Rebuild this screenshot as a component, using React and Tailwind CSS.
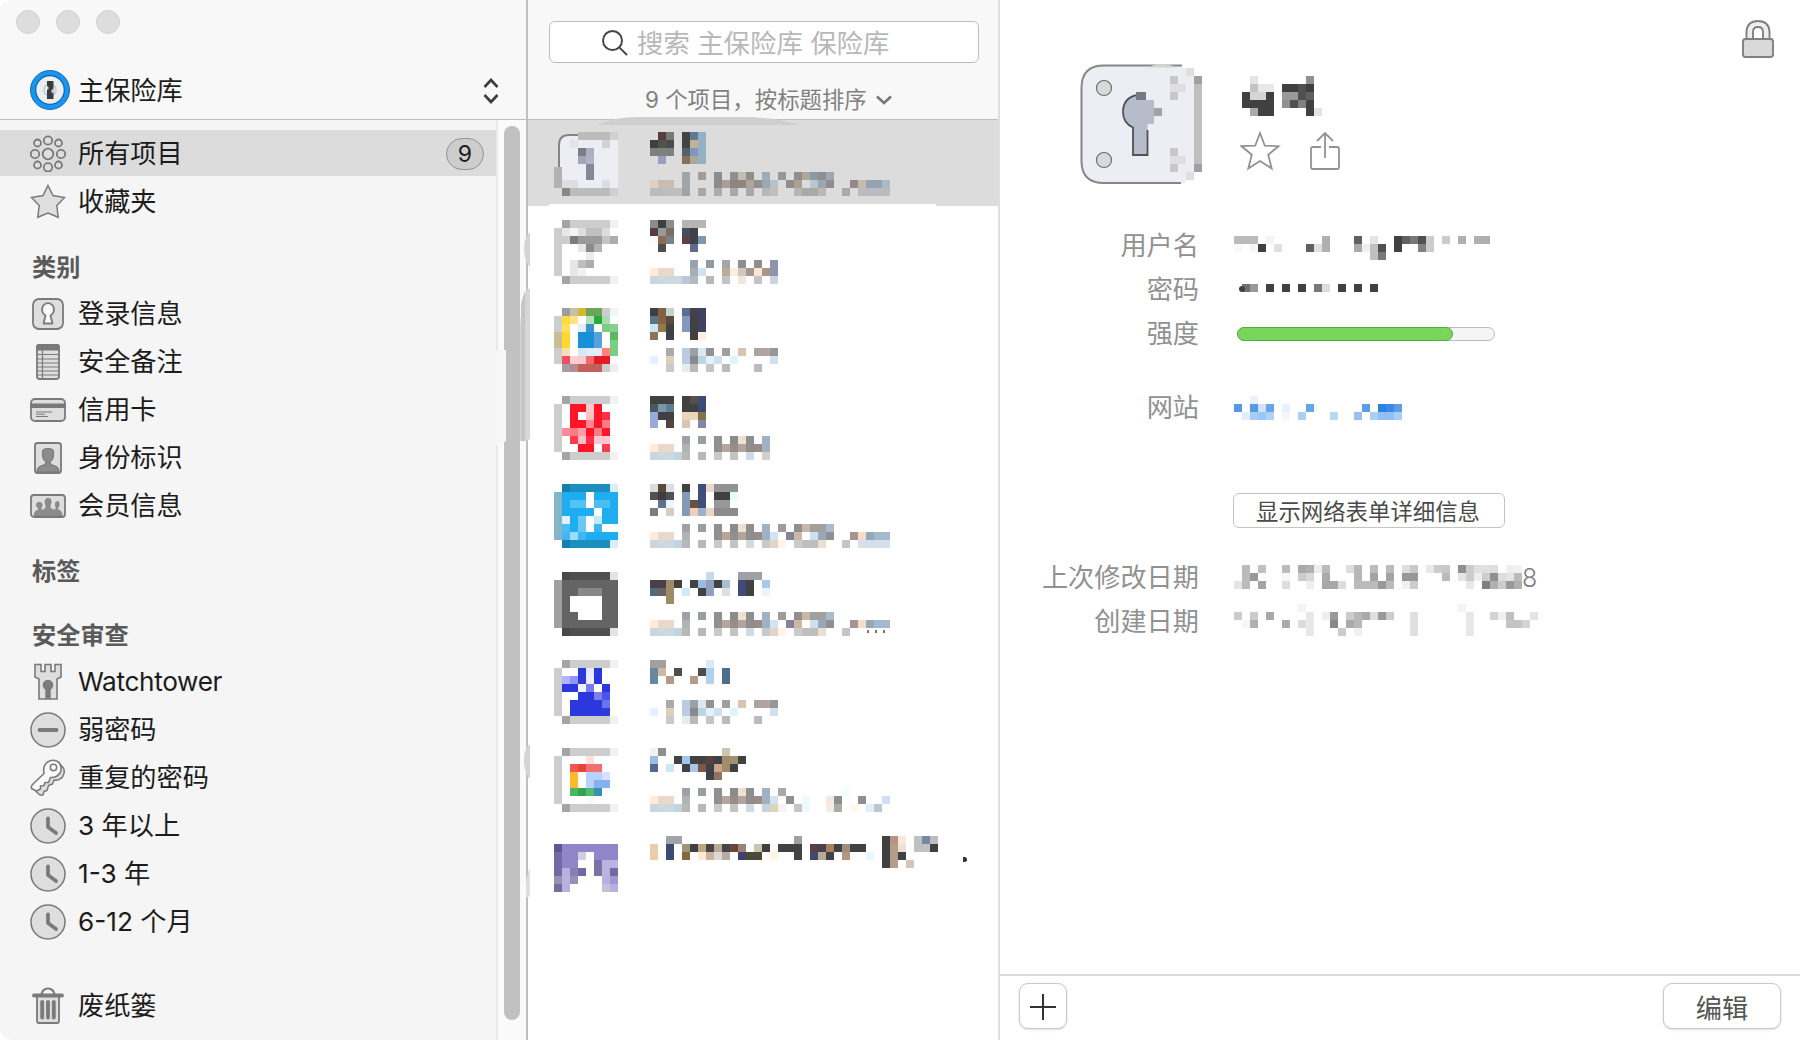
import React from "react";

/* Paints a grid of square cells. Each line is "row|col:hex col-col:hex ...". */
function Mosaic({ data, cols, rows, className = "" }) {
  const cells = [];
  data
    .trim()
    .split("\n")
    .forEach((line) => {
      const [r, rest] = line.trim().split("|");
      rest
        .trim()
        .split(/\s+/)
        .forEach((token) => {
          const [range, color] = token.split(":");
          const [a, b] = range.split("-").map(Number);
          const end = b === undefined ? a : b;
          cells.push({ x: a * 8, y: Number(r) * 8, w: (end - a + 1) * 8, c: "#" + color });
        });
    });
  return (
    <svg
      width={cols * 8}
      height={rows * 8}
      viewBox={`0 0 ${cols * 8} ${rows * 8}`}
      shapeRendering="crispEdges"
      className={"block shrink-0 " + className}
    >
      {cells.map((c, i) => (
        <rect key={i} x={c.x} y={c.y} width={c.w} height={8} fill={c.c} />
      ))}
    </svg>
  );
}

const FRAME = `
0|1:a4a4a4 2-6:cdcdcd 7:f1f1f1
1|0:cdcdcd
2|0:cdcdcd
3|0:cdcdcd
4|0:cdcdcd
5|0:cdcdcd
6|0:cdcdcd
7|1:a4a4a4 2-6:cdcdcd 7:f1f1f1
`;

const SUB_SHORT = `
5|4:9fa3a6 6:999ea0 8:938f8e 10:8c8a8c 11:efe1d0 12:8e8e8e 14:a0b2c2
6|0:ffeadb 1-2:ead8cc 4:b0b4b6 8:938f8e 9:bba59a 10:938f8e 11:b0a59b 12:8e8e8e 13:9a8c88 14:a0b2c2
7|0:cad5e0 1-2:ccd8e2 3:c4d4df 4:b8b8b8 6:b8b8b8 8:c9c9c9 10:c4c4c4 12:cfdbe6 14:cfcfcf
`;

const SUB_LONG =
  SUB_SHORT +
  `5|16:a09c9c 18:8f8f8f 19:cab8a4 20:a0a0a0 21:a3a09e 22:a9bbcc
6|15:d0e4f6 17:84839a 18:c9b9a5 20:cfe0f0 21:98a8b8 22:908f94 25:a99590 26:f4dccb 27:94a8b8 28-29:a5b9ce
7|14:c5cacd 15:e3d5c2 16:fff5ea 18:cbcbcb 19-20:bfbfbf 21:eaded3 24:c5c5c5
`;

const SUB_PHONE = `
5|2:aaaaaa 4:bccbe0 5:9aa0a3 6:d9e9f3 7:8f9398 9:9ba0a3 11:d7c3b0 13:a6a6a6 14:b5a59c 15:979797
6|0:e2f1fd 2:dccfbc 4:bccbe0 5:878b8f 6:bfd4e2 7:e1f2fd 8:cfe1f0 10:e1f2fd 15:cfe1f0
7|2:c9c9c9 4:e3ebf4 5:b9b9b9 7:c5c5c5 9:bbbbbb 13:bbbbbb
`;

const ITEMS = [
  {
    icon: `
0|3-6:bcbcbc 7:d0d0d0
1|2:e2e3e6 3-5:edeef3 6:d2d3d8 7:edeef3
2|1-2:edeef3 3:7b7d8c 4:aeaec2 5-7:edeef3
3|1-2:edeef3 3:a5a5b8 4:b2b1c5 5-7:edeef3
4|1-3:edeef3 4:878799 5-7:edeef3
5|1-3:edeef3 4:878799 5-7:edeef3
6|1-2:dcdde0 3-5:edeef3 6:dcdde0 7:edeef3
7|1:888888 2-6:bcbcbc 7:d0d0d0`,
    text: `
0|1:5b3c42 2:777b76 4:444444 5:5e7b90 6:94b0c3
1|0:3c4140 1:525250 2:4b4a4c 4:444444 5:c4b096 6:94b0c3
2|0-2:7e827d 4:56606a 5:8296bd 6:94b0c3
3|1:99a0bd 4:877060 5:aaa899 6:94b0c3
5|4:a0a5a8 6:a59c9a 8:8d8b8b 10:958f8b 11:c5bdb4 12:8f8f8f 14:9cabb5 16:94979d 18:8f8f8f 19:b0a698 20:8c99a1 21:918f8f 22:99a9b7
6|0:e1cfbf 1-2:cbbcb2 4:a0a5a8 8:8d8b8b 9:ad9d97 10-11:8d8683 12:ada69c 13:918f8f 14:99a8b3 15:b7c2c8 17:908c90 18:aaa194 20:b9c6cf 21:99a8b3 22:908c90 25:998888 26:c9b9ac 27:93a2b5 28:96a4b2 29:a9bacb
7|0-1:b9bcc0 2-3:bebebe 4:a0a3a5 6:a9a9a9 8:adadad 10:a9a9a9 12:a9a9a9 14:b6b7b8 15:c4beb6 18:b6b6b6 19-20:a9a9a9 21:c0b8b0 24:aaaaaa 26-29:b9bdc3`,
  },
  {
    icon:
      FRAME +
      `1|1:e7e7e7 2:f4f4f4 3:dedede 4-5:c0c0c0 6:dcdcdc
2|1:cdcdcd 2:7c7c7c 3:999999 4-5:9b9b9b 6:c5c5c5 7:adadad
3|3:e6e6e6 4:8a8a8a 5:b4b4b4
4|4:ececec
5|2:e6e6e6 3:bfbfbf 4:adadad
6|2:e8e8e8 3:f1f1f1`,
    text: `
0|0:8c8c8c 1:3d4040 2:8c8c8c 4-6:b5b5b5
1|0:563c42 1:999999 2:7b6b60 4:40505f 5:404048
2|0:fffaf5 1:8c6c4f 2:78818a 4:5c4044 5:404048 6:7d9ab3
3|1:504d50 5:5f6b90
5|5:98a3ab 7:93999e 9:a6a6a6 11:8e8e8e 13:8e8e8e 15:8e93ae
6|0:ffeadb 1-2:ead8cc 5:a6aeb8 6:cfe3f5 9:b9ab9e 10:ffecdc 11:d0c8bd 12:a6968f 13:ffe4d2 14:a6968f 15:8e93ae
7|0:cad5e0 1-3:ccd8e2 4:b9c8d8 5:b8b8b8 7:b8b8b8 9:c4c4c4 11:f0e6de 13:c4c4c4 15:c9d4e0`,
  },
  {
    icon: `
0|1:9e9da6 2:c9c2a2 3:d1b932 4-5:6ca557 6:cdcdcd 7:f4f4f4
1|0:cdcdcd 1:ffdc3a 2:ffe285 4:b7e0b7 5:27ab3c 6:a9dcae
2|0:cdcdcd 1:ffe05a 3:e1edfa 4:3a91d0 6:7fcb85 7:86cf8c
3|0:c9bd96 1:ffd82d 3-4:1690d6 5:58a1da 7:5bb960
4|0:c9bd96 1:ffd82d 3-4:1690d6 5:58a1da 7:79cd84
5|0:cdcdcd 1:f4e1b1 3:d8e6f5 4-5:dfedfb 6:ff837a 7:79cd84
6|0:cdcdcd 1:ec5064 2:ffcfcf 3:ffc9d0 4:f0696e 5-6:e41b23
7|1:a49fa0 2:b58b90 3-5:c36057 6:cdcdcd 7:eeeeee`,
    text:
      `
0|0:3d4040 1:836043 2:c2d4ce 4:5b6d92 5:41424b 6:404260
1|0:5c7688 1:85613f 2:5a4a40 4:8498c0 5:414142 6:404260
2|0:c8e6f8 1:95774f 2:404242 4:8498c0 5:404040 6:404260
3|0:8e7355 2:404242 5:404040 6:fdf0e2` + SUB_PHONE,
  },
  {
    icon:
      FRAME +
      `1|2-3:ff1525 4:ffc8cc 5:ff1525
2|2:ff1525 4:ffc0c8 5:ff1525 6:ff3045
3|2-3:ff1525 4:ff8790 5:ff1525 6:ff7987
4|1:ff8b98 2:ff7987 3:ff9ba5 4:ff1525 5:ff7987 6:ff1525
5|2:ff3c4c 3:ffc0c8 4:ff3045 5-6:ffc8d0
6|3-4:ff1525 6:ff3c4c`,
    text:
      `
0|0-2:404242 4:414040 5:56504c 6:3c4a76
1|0:4a5862 1:7797a6 2:5d7d94 4-5:404042 6:3c4a76
2|0:9aaad8 1-2:404042 4-5:ecd3ba 6:82734f
3|0:9aaad8 2:504540 4:d9c6b2 6:7f88a6` + SUB_SHORT,
  },
  {
    icon: `
0|1:137fae 2-6:1b8fbe 7:dcebf4
1|0:85b4c8 1-3:1fadf2 5-7:1fadf2
2|0:85b4c8 1:1fadf2 2-3:52c3f5 5-6:4abdf5 7:1fadf2
3|0:85b4c8 1-4:1fadf2 6-7:1fadf2
4|0:85b4c8 1:dff3ff 2:1fadf2 3:6bcaf5 5:c5eaff 6-7:1fadf2
5|0:85b4c8 1:4cbcf3 2:1fadf2 3:68c7f3 5:3bb6f3
6|0:85b4c8 1:3fb8f5 2:9dddfb 3:3fb8f5 4-7:1fadf2
7|1:137fae 2-6:1b8fbe 7:dcebf4`,
    text:
      `
0|0:dcdcdc 1:5a4a3c 2:dcdde0 4:404242 6:404f7a 7:edd6cc 8-10:939393
1|0:4f5154 1:3f3c3b 2:4f5154 4:8599b8 6:404f7a 8-9:404242 10:e6fdff
2|1:5d728c 2:e9f7ff 4:8599b8 5:6a5242 6:404f7a 8-9:989898
3|0:7a7e80 2:d8cbc0 4:8599b8 5:edd0b5 6:9cb0c8 7:e9d4c8 8-10:8b8b8b` +
      SUB_LONG +
      `7|26-29:d4e0ec`,
  },
  {
    icon: `
0|1:484848 2-6:505050 7:e4e4e4
1|0:a0a0a0 1-7:646464
2|0:a0a0a0 1-2:646464 3-5:888888 6-7:646464
3|0:a0a0a0 1:646464 6-7:646464
4|0:a0a0a0 1:646464 6-7:646464
5|0:a0a0a0 1-2:646464 6-7:646464
6|0:a0a0a0 1-7:646464
7|1:484848 2-6:505050 7:e4e4e4`,
    text:
      `
0|7:c9d8ea 11-13:9f9fa8
1|0-1:46414a 2:a08b69 3:44403c 5:404244 6:9cbcdf 7:8f9fbd 8:404244 9:a9bfce 11:3f4a78 12:404242 14:a9c9e9
2|0:546878 1:6d6163 2:a08b69 4:cfe9ff 6:404244 7:8f9fbd 9:dedee2 11:3f4a78 12:404242 14:e9f6ff
3|2:a08b69` + SUB_LONG,
    dots: true,
  },
  {
    icon:
      FRAME +
      `1|3:2a38de 4:e8e8ff 5:2a38de
2|1:b0b4ff 2:9095f5 3:2a38de 4:eeeeff 5:2a38de
3|1-2:2a38de 3:f0f0ff 4:7a7cf5 6:2a38de
4|3-4:2a38de 5:7a80ee 6:4a55ee
5|2-5:2a38de 6:6a72f0
6|2-5:2a38de 6:2f3cd8`,
    text:
      `
0|0-1:a0a0a0 7:d9e9f7
1|0:6888a0 1:cfb9a4 3:4e5048 6:4e5048 7:afd0ee 9:4c6e8c
2|0:6888a0 2:b49984 5:b49b8c 7:afd0ee 9:4c6e8c` + SUB_PHONE,
  },
  {
    icon:
      FRAME +
      `1|4:ffe0e0
2|2:f25555 3:ea4335 4-5:f07070
3|2:fcba2c 4-5:b8d2fb 6:dce0ff
4|2:fcba2c 4:b8d2fb 5-6:86b0f4
5|2:47b765 3:34a44c 4:52ba72 5:3990b0
6|4:f4fff4`,
    text:
      `
0|0:f2f2f2 1:8f8f8f 9:cdc5b4
1|0:9fbbdf 3:404244 4:a4c5e6 5-6:404244 7:58403c 8:40404a 9:a08c69 10:a0916f 11:404040
2|0:56678f 2:c9eaf0 4:40404a 5:aac5ea 6:7b5748 7:404048 8:cca585 9:a08c69 10:404040
3|7:404048 8:8f7464` +
      SUB_SHORT +
      `5|16:a9a9a9 24:f2fdfd
6|15:d0e4f6 17:8f8f8f 19:eefaff 22:f5e9e4 23:8f8f8f 26:8f8f8f 29:d0dff6
7|14:c4d3de 15:ddd5b8 16:f4f4f4 18:c5c5c5 19:eefaff 22:f4ebe6 23:aaaaaa 25:fff8ee 27:e0f0fa 28:bfc6c9`,
  },
  {
    icon: `
1|0:5f5890 1-7:9085c8
2|0:726aa5 1-2:9085c8 3:d0cee0 5-7:9085c8
3|0:726aa5 1:9085c8 2:8f87c4 5:7a72a8 6-7:bab4e0
4|0:726aa5 1:b8b0e0 2:8880b0 3:726aa5 5:7a72a8 6:bab4e0 7:726aa5
5|0:9590b8 1:b8b0e0 2:9590b8 6:b8b0e0 7:a098d0
6|0:726f98 1:b8b0e0 6:c4c2d8 7:b8b0e0`,
    text: `
0|2-3:a0a4a8 18:a0a0a0 29:404040 30:b09484 31:fae8d8 33:bfc1c3 34:7788a5 35:bdbdbd
1|0:e9ceac 2:3f4a74 4:a0957c 5:404040 6:bba585 7:4a4444 8:b8ab95 9:44444a 10:6b453c 11:9a8478 13:cac5b0 14:404040 15:fffaf0 16-18:404244 20:5a4044 21:48404a 22:a58360 23:404244 24:a68b7c 25-26:404244 29:404040 30:b59c8b 31:eee0d4 33-34:bfc1c3 35:404040
2|0:e9ceac 2:3f4a74 4:826a40 6:ffe8d8 7:c9b4a4 8:e0d8d4 9:b8aca0 11:404070 12-13:4a4a38 15:fff6e0 18:404244 20:404a70 21:b8ab95 22:404244 24:b59580 27:e6f8ff 29:404040 30:b59c8b 31:404040
3|29:404040 30:b59c8b 32:d5c5b8`,
  },
];

const TITLE = `
0|1:e4e4e4 8:909090
1|1:c4c4c4 2-3:e8e8e8 5-6:404040 7:505050 8:404040
2|0:404040 1-2:d5d5d5 3:404040 5-6:999999 7:505050 8:606060
3|0-3:404040 5:909090 6:505050 7:808080 8:404040
4|1:aaaaaa 2-3:404040 8:404040 9:e4e4e4`;

const USERNAME = `
0|0-2:bbbbbb 4:f4f4f4 11:b0b0b0 15:606060 17:e4e4e4 20:404040 21:606060 22:787878 23:505050 24:cccccc 26:cccccc 28:b0b0b0 30-31:b0b0b0
1|0:f8f8f8 2:f6f6f6 3:404040 5:e0e0e0 9:606060 10:e0e0e0 11:b0b0b0 15:aaaaaa 16:f0f0f0 17:c0c0c0 18:505050 20:404040 23:808080 24:cccccc
2|17:c0c0c0 18:787878`;

const PASSWORD = `
0|1:707070 2:999999 4:404040 6:404040 8:404040 10:777777 11:dddddd 13:404040 15:404040 17:404040`;

const WEBSITE = `
0|2:e8f0fa
1|0:5598e8 2:5598e8 3:d0e0f6 4:69a3ec 6:e4f2fe 9:69a3ec 16:5c9dea 18:2882e0 19:4088e8 20:5c9dea
2|1:e0edfb 2:a8ccf5 3:98c8f5 4:b0d2f5 6:f4f8fc 8:b0cff0 12:b8d8f2 15:98bfee 17:b0cff0 18-19:90c0f4 20:a8cff5`;

const MODIFIED = `
0|1:bbbbbb 3:c0c0c0 6:bbbbbb 8:aaaaaa 9:b0b0b0 10:eeeeee 11:bbbbbb 14:dddddd 15:b8b8b8 17:bbbbbb 19:bbbbbb 21:dddddd 22:c8c8c8 24:e8e8e8 25:cccccc 26:c8c8c8 28:909090 29:cccccc 30-31:e0e0e0 32:dddddd 34:eeeeee 35:f2f2f2
1|1:bbbbbb 2:999999 6:f8f8f8 8:cccccc 9:d8d8d8 11:aaaaaa 15:b8b8b8 17:a4a4a4 19:a4a4a4 21-22:989898 26:bbbbbb 28:e4e4e4 29:cccccc 30:eeeeee 31:cccccc 32:909090 33:dddddd 34:e4e4e4 35:bbbbbb
2|0:e4e4e4 1:bbbbbb 3:a4a4a4 6:dddddd 9:eeeeee 11-12:a8a8a8 13:dddddd 15-17:bbbbbb 18:999999 19:bbbbbb 21:f0f0f0 22:cccccc 29:e8e8e8 31:808080 32:b0b0b0 33:cccccc 34:999999 35:b0b0b0`;

const CREATED = `
0|8:f4f4f4 28:f4f4f4
1|0:cccccc 2:cccccc 4:a8a8a8 9:e8e8e8 11:eeeeee 12:999999 14:cccccc 15:b8b8b8 16:aaaaaa 17:dddddd 18:999999 19:cccccc 22:e0e0e0 29:e8e8e8 32:d4d4d4 33:f0f0f0 34:c0c0c0 37:e4e4e4
2|1:f6f6f6 2:b0b0b0 6:aaaaaa 8:dddddd 9:e8e8e8 12:888888 14:aaaaaa 15:b8b8b8 22:e0e0e0 29:e8e8e8 34-35:c4c4c4 36:d4d4d4
3|9:e8e8e8 13:cccccc 15:f0f0f0 22:e0e0e0 29:e8e8e8`;

function Glyph({ children }) {
  return (
    <svg
      width="36"
      height="38"
      viewBox="0 0 36 38"
      fill="#dedede"
      stroke="#7a7a7a"
      strokeWidth="1.8"
      strokeLinejoin="round"
      className="block shrink-0"
    >
      {children}
    </svg>
  );
}

const AllIcon = () => (
  <Glyph>
    <circle cx="18" cy="20" r="5.300" />
    {[[18, 6.5], [18, 33.3], [5, 20], [31, 20]].map(([x, y]) => (
      <circle key={x + "-" + y} cx={x} cy={y} r="4.200" />
    ))}
    {[[7.5, 9], [28.5, 9], [7.5, 31], [28.5, 31]].map(([x, y]) => (
      <circle key={x + "-" + y} cx={x} cy={y} r="3.500" />
    ))}
  </Glyph>
);
const StarIcon = () => (
  <Glyph>
    <path strokeWidth="1.500" strokeLinejoin="miter" d="M18 3.500 L23 13.500 L34.500 15.500 L26.800 23.500 L28.200 35.200 L18 31 L7.800 35.200 L9.200 23.500 L1.500 15.500 L13 13.500 Z" />
  </Glyph>
);
const LoginIcon = () => (
  <Glyph>
    <rect x="3" y="5" width="30" height="30" rx="6" />
    <path fill="#f8f8f8" d="M15.500 21.500 A6 6.500 0 1 1 20.500 21.500 L22.500 29.500 H13.500 Z" />
  </Glyph>
);
const NoteIcon = () => (
  <Glyph>
    <rect x="7" y="3" width="22" height="34" rx="2.500" />
    <path fill="#7a7a7a" d="M7 7.500 V5 Q7 3 9 3 H27 Q29 3 29 5 V7.500 Z" />
    <path strokeWidth="1.200" d="M12.500 8 V37 M7 12.500 H29 M7 17 H29 M7 21 H29 M7 25 H29 M7 29 H29 M7 33 H29" />
  </Glyph>
);
const CardIcon = () => (
  <Glyph>
    <rect x="1" y="9" width="34" height="22" rx="4" />
    <rect x="1" y="14.500" width="34" height="2.500" fill="#7a7a7a" />
    <path strokeWidth="1.100" d="M6 22 H22 M6 24.300 H15 M6 26.500 H18" />
  </Glyph>
);
const IdIcon = () => (
  <Glyph>
    <rect x="5" y="5" width="26" height="30" rx="2.500" />
    <path fill="#8c8c8c" strokeWidth="1.200" d="M12.500 18 V14 Q12.500 10.500 18 10.500 Q23.500 10.500 23.500 14 V18 Q22.500 24 18 24 Q13.500 24 12.500 18 Z M7 34 Q7 29 12 27.500 Q16 27 16 24 H20 Q20 27 24 27.500 Q29 29 29 34 Z" />
  </Glyph>
);
const MembersIcon = () => (
  <Glyph>
    <rect x="1" y="9" width="34" height="22" rx="3" />
    <path
      fill="#8c8c8c"
      strokeWidth="0.600"
      d="M4 30 Q4 25 8 24 Q9.500 23.500 8 22 Q5.500 20 7 17 Q9 15.500 11.500 17 Q13 19 11 22.500 Q10.500 24 12.500 24 Q16 23 16 20.500 Q14 15 16 13 Q18 11.500 20.500 13 Q22 16 20 20 Q20 23 24 24 Q26.500 23.500 26 22 Q24.500 17 26 16 Q28 14.500 29 16.500 Q30 20 27.500 22.500 Q28 24 30 24.500 Q32.500 26 32 30 Z"
    />
  </Glyph>
);
const TowerIcon = () => (
  <Glyph>
    <path strokeLinejoin="miter" strokeWidth="1.600" d="M5 2.500 H11 V9.500 H15 V2.500 H21 V9.500 H25 V2.500 H31 V15 L27 17 V37 H9 V17 L5 15 Z" />
    <circle cx="18" cy="23" r="5.300" fill="#7a7a7a" stroke="none" />
    <rect x="15.300" y="24" width="5.400" height="13" fill="#7a7a7a" stroke="none" />
  </Glyph>
);
const MinusIcon = () => (
  <Glyph>
    <circle cx="18" cy="20" r="17" strokeWidth="1.500" />
    <path d="M9.500 20 H26.500" strokeWidth="3.800" strokeLinecap="round" />
  </Glyph>
);
const KeyIcon = () => (
  <Glyph>
    <path
      strokeWidth="1.500"
      d="M6 33.500 L10 37 H13 L14 33.500 L17 32.500 L18.500 27.500 L22.500 26 L24 22 Q29 23 32.500 19 Q35.500 14.500 33.500 10 L29 5 Z"
    />
    <path
      fill="#fafafa"
      strokeWidth="1.600"
      d="M14 15.500 Q12.500 8 17.500 4 Q23 0.500 28.500 4 Q33 9 30 15 Q26.500 20 20.500 19.500 L18.500 24.500 H15 L14 27.500 L10.500 28 V31 L6.500 33 L1.500 30.500 Q1 28 2.500 26.500 Z"
    />
    <circle cx="23.500" cy="9.500" r="3.200" fill="#fafafa" strokeWidth="1.500" />
  </Glyph>
);
const ClockIcon = () => (
  <Glyph>
    <circle cx="18" cy="20" r="17" strokeWidth="1.500" />
    <path d="M18 12.500 V21 L26 27" fill="none" strokeWidth="3.800" strokeLinecap="round" />
  </Glyph>
);
const TrashIcon = () => (
  <Glyph>
    <path fill="none" strokeWidth="2.200" d="M11.500 8 Q13 2.500 18 2.500 Q23 2.500 24.500 8" />
    <path d="M7 10 H29 V35 Q29 37 27 37 H9 Q7 37 7 35 Z" />
    <path strokeWidth="3.800" strokeLinecap="round" d="M4 9.500 H32" />
    <path strokeWidth="3.800" strokeLinecap="round" d="M12.200 16 V31.500 M18 16 V31.500 M23.800 16 V31.500" />
  </Glyph>
);

function Row({ icon, label, selected, badge, labelClass = "" }) {
  return (
    <div className="flex h-12 items-center">
      <div
        className={
          "flex h-[46px] w-full items-center pr-3 pl-[30px] " + (selected ? "bg-[#dcdcdc]" : "")
        }
      >
        {icon}
        <span className={"ml-3 flex-1 pt-px text-[26.200px] leading-[46px] text-[#1c1c1c] " + labelClass}>
          {label}
        </span>
        {badge && (
          <span className="mt-[2px] flex h-8 w-[38px] items-center justify-center rounded-full border-[1.5px] border-[#959595] bg-[#cdcdcd] text-[23px] text-[#1c1c1c]">
            {badge}
          </span>
        )}
      </div>
    </div>
  );
}

function Heading({ children, className }) {
  return (
    <h2 className={"pt-px pl-8 text-[24.200px] leading-[35px] font-bold text-[#5a5a5a] " + className}>
      {children}
    </h2>
  );
}

function Sidebar() {
  return (
    <aside className="relative flex w-[528px] shrink-0 flex-col overflow-hidden rounded-l-[12px] border-r-2 border-[#bfbfbf] bg-[#f5f5f5]">
      <header className="h-[120px] shrink-0 border-b border-[#c0c0c0] bg-[#f8f8f8]">
        <div className="flex gap-4 pt-[10px] pl-4">
          {[0, 1, 2].map((i) => (
            <span key={i} className="size-6 rounded-full border border-[#d0d0d0] bg-[#dddddd]" />
          ))}
        </div>
        <div className="mt-9 flex h-10 items-center pr-[27px] pl-[30px]">
          <svg width="40" height="40" viewBox="0 0 40 40" className="shrink-0">
            <circle cx="20" cy="20" r="19.500" fill="#1795f2" stroke="#1b6bb5" />
            <circle cx="20" cy="20" r="14.300" fill="#eceff2" stroke="#14639f" strokeWidth="1.200" />
            <circle cx="20" cy="20" r="6" fill="none" stroke="#c2cbd3" strokeWidth="1.500" />
            <rect x="17" y="11" width="6.500" height="18" fill="#3c3c3c" />
            <path d="M17 20 l1.500 -1 v-2 l-1.500 -1z M23.500 18.500 l-2 1.500 v2.500 l2 1z" fill="#d5dade" />
          </svg>
          <span className="ml-2 flex-1 pt-[2px] text-[26.200px] leading-10 text-[#1c1c1c]">主保险库</span>
          <svg width="16" height="26" viewBox="0 0 16 26" fill="none" stroke="#3c3c3c" strokeWidth="2.600" className="mt-[2px]">
            <path d="M1.500 9 L8 2 L14.500 9 M1.500 17 L8 24 L14.500 17" />
          </svg>
        </div>
      </header>
      <div className="flex min-h-0 flex-1">
        <nav className="w-[498px] shrink-0 border-r-2 border-[#e8e8e8] pt-[9px]">
          <Row icon={<AllIcon />} label="所有项目" selected badge="9" />
          <Row icon={<StarIcon />} label="收藏夹" />
          <Heading className="mt-6 mb-1">类别</Heading>
          <Row icon={<LoginIcon />} label="登录信息" />
          <Row icon={<NoteIcon />} label="安全备注" />
          <Row icon={<CardIcon />} label="信用卡" />
          <Row icon={<IdIcon />} label="身份标识" />
          <Row icon={<MembersIcon />} label="会员信息" />
          <Heading className="mt-6">标签</Heading>
          <Heading className="mt-7 mb-1">安全审查</Heading>
          <Row icon={<TowerIcon />} label="Watchtower" labelClass="tracking-[-0.35px]" />
          <Row icon={<MinusIcon />} label="弱密码" />
          <Row icon={<KeyIcon />} label="重复的密码" />
          <Row icon={<ClockIcon />} label="3 年以上" />
          <Row icon={<ClockIcon />} label="1-3 年" />
          <Row icon={<ClockIcon />} label="6-12 个月" />
          <div className="mt-9">
            <Row icon={<TrashIcon />} label="废纸篓" />
          </div>
        </nav>
        <div className="flex-1 bg-[#fafafa] pt-[6px] pl-[6px]">
          <div className="h-[894px] w-4 rounded-full bg-[#c1c1c1]" />
        </div>
      </div>
    </aside>
  );
}

function ItemRow({ item, index }) {
  const first = index === 0;
  return (
    <div
      className={
        "relative flex shrink-0 pl-[26px] " + (first ? "h-[87px] bg-[#dcdcdc] pt-3" : "h-[88px] pt-[13px]")
      }
    >
      {first && (
        <svg width="470" height="91" viewBox="0 0 470 91" className="absolute -top-1 left-0">
          <path d="M69 9 Q84 1 112 1 H215 Q245 1 272 9 Z" fill="#cfcfcf" />
          <path d="M31 58 V29 Q31 19 41 19 H60" fill="#edeef3" stroke="#858585" strokeWidth="2" />
          <path d="M34 50 Q34 22 52 22 H60 V50 Z" fill="#edeef3" />
          <rect x="26" y="51" width="8" height="21" fill="#b2b2b2" />
          <rect x="21" y="88" width="387" height="3" fill="#fff" />
          <rect x="0" y="90" width="470" height="1" fill="#fff" />
        </svg>
      )}
      <Mosaic data={item.icon} cols={8} rows={8} className="relative" />
      <Mosaic data={item.text} cols={36} rows={8} className="relative ml-8" />
      {item.dots && (
        <svg width="24" height="8" viewBox="0 0 24 8" className="absolute top-[71px] left-[338px]" fill="#777">
          <rect x="1" y="0" width="2" height="3" />
          <rect x="9" y="0" width="2" height="3" />
          <rect x="17" y="0" width="2" height="3" />
        </svg>
      )}
      {index === 8 && (
        <span className="absolute top-[34px] left-[435px] h-[5px] w-[4px] rounded-r-full bg-[#333]" />
      )}
    </div>
  );
}

function ItemList() {
  return (
    <section className="flex w-[472px] shrink-0 flex-col border-r-2 border-[#dedede] bg-white">
      <header className="h-[120px] shrink-0 border-b border-[#c0c0c0] bg-[#f8f8f8] pt-[21px]">
        <div className="ml-[21px] flex h-[42px] w-[430px] items-center rounded-md border border-[#bdbdbd] bg-white pl-[52px]">
          <svg width="26" height="26" viewBox="0 0 26 26" fill="none" stroke="#444" strokeWidth="1.900" className="mt-[2px]">
            <circle cx="10.500" cy="10.500" r="9.500" />
            <path d="M17.300 17.300 L25 25" />
          </svg>
          <span className="ml-[9px] pt-[2px] text-[26.400px] leading-10 whitespace-pre text-[#b8b8b8]">
            搜索 主保险库 保险库
          </span>
        </div>
        <div className="mt-[21px] flex h-8 items-center pl-[117px] text-[22.400px] leading-8 text-[#808080]">
          <span>9 个项目，按标题排序</span>
          <svg width="18" height="12" viewBox="0 0 18 12" className="ml-2" fill="none" stroke="#777" strokeWidth="2.600">
            <path d="M2 2.500 L9 9 L16 2.500" />
          </svg>
        </div>
      </header>
      {ITEMS.map((item, i) => (
        <ItemRow key={i} item={item} index={i} />
      ))}
    </section>
  );
}

function KeyholeArt() {
  return (
    <svg width="124" height="122" viewBox="0 0 124 122" className="shrink-0">
      <path d="M44 1 H22 Q1 1 1 24 V97 Q1 119 23 119 H114 V4 H102 L100 1 Z" fill="#eceef3" />
      <path d="M102 1.500 H24 Q1.500 1.500 1.500 24 V97 Q1.500 119 24 119 H101" fill="none" stroke="#868686" strokeWidth="2" />
      <path d="M68 3.500 Q82 -4 96 3.500 Z" fill="#d2d2d2" />
      <g fill="#d8d9dc" stroke="#6e6e6e" strokeWidth="1.200">
        <circle cx="24" cy="24" r="7.500" />
        <circle cx="24" cy="96" r="7.500" />
      </g>
      <path d="M57 31 Q43 34 43 48 Q43 59 53 63.500 V91 H67.500 V60 H74 V36 H66 V31 Z" fill="#b7bccb" />
      <path d="M57 31 Q43 34 43 48 Q43 59 53 63.500 V91 H67.500 V66" fill="none" stroke="#505258" strokeWidth="1.800" />
      <g shapeRendering="crispEdges">
        <path d="M56 28h10v8h-10z" fill="#777987" />
        <path d="M74 44h8v8h-8z" fill="#a2a4aa" />
        <path d="M90 12h8v8h-8z M90 28h8v8h-8z M90 84h8v8h-8z M90 100h8v8h-8z" fill="#c8c8c8" />
        <path d="M90 20h16v8h-16z M90 92h16v8h-16z M106 4h8v8h-8z M106 108h8v8h-8z" fill="#dfdfe0" />
        <path d="M106 116h8v4h-8z" fill="#fff" />
        <path d="M114 20h8v80h-8z" fill="#bfbfbf" />
        <path d="M114 12h8v8h-8z M114 100h8v8h-8z" fill="#a0a0a0" />
      </g>
    </svg>
  );
}

function Field({ label, children, className = "" }) {
  return (
    <div className={"flex h-11 gap-[35px] " + className}>
      <div className="w-[199px] shrink-0 pt-px text-right text-[26.200px] leading-[44px] text-[#919191]">
        {label}
      </div>
      {children}
    </div>
  );
}

function Detail() {
  return (
    <main className="flex min-w-0 flex-1 flex-col bg-white">
      <div className="flex h-[223px] shrink-0">
        <div className="flex flex-1 pt-16 pl-20">
          <KeyholeArt />
          <div className="ml-[38px] pt-3">
            <Mosaic data={TITLE} cols={10} rows={5} />
            <svg width="100" height="42" viewBox="0 0 100 42" className="mt-[14px] -ml-[2px]" fill="none" stroke="#929292" strokeWidth="1.800">
              <path d="M20 3 L24.800 15.700 L38.500 16.200 L28.200 24.700 L31.700 38.500 L20 31 L8.300 38.500 L11.800 24.700 L1.500 16.200 L15.200 15.700 Z" />
              <path d="M81 17 H73 Q71 17 71 19 V37 Q71 39 73 39 H97 Q99 39 99 37 V19 Q99 17 97 17 H89 M85 28 V3 M77 11 L85 3 L93 11" />
            </svg>
          </div>
        </div>
        <svg width="34" height="40" viewBox="0 0 34 40" className="mt-[19px] mr-[25px] shrink-0" stroke="#808080" strokeWidth="1.900">
          <path d="M5.500 20 V13 Q6 2 17 2 Q28 2 28.500 13 V20 H22 V13 Q22 8 17 8 Q12 8 12 13 V20 Z" fill="#eeeeee" />
          <rect x="2" y="20" width="30" height="18" rx="2.500" fill="#d8d8d8" />
        </svg>
      </div>

      <Field label="用户名">
        <Mosaic data={USERNAME} cols={32} rows={3} className="mt-[13px]" />
      </Field>
      <Field label="密码">
        <div className="relative mt-[17px]">
          <span className="absolute top-[2px] left-[5px] h-[6px] w-[6px] rounded-full bg-[#404040]" />
          <Mosaic data={PASSWORD} cols={18} rows={1} />
        </div>
      </Field>
      <Field label="强度">
        <div className="mt-4 ml-[3px] h-[14px] w-[258px] rounded-full border border-[#bbb] bg-[#f5f5f5]">
          <div className="-mt-px -ml-px h-[14px] w-[216px] rounded-full border border-[#5da645] bg-[#78d75a]" />
        </div>
      </Field>
      <Field label="网站" className="mt-[30px]">
        <Mosaic data={WEBSITE} cols={21} rows={3} className="mt-[11px]" />
      </Field>
      <button className="mt-16 ml-[233px] h-[35px] w-[272px] shrink-0 rounded-md border border-[#c4c4c4] bg-white pt-[2px] pr-[2px] text-[22.400px] leading-[31px] text-[#4a4a4a]">
        显示网络表单详细信息
      </button>
      <Field label="上次修改日期" className="mt-[27px]">
        <div className="flex">
          <Mosaic data={MODIFIED} cols={36} rows={3} className="mt-[10px]" />
          <span className="pt-px text-[25px] leading-[44px] font-light text-[#808080]">8</span>
        </div>
      </Field>
      <Field label="创建日期">
        <Mosaic data={CREATED} cols={38} rows={4} className="mt-[5px]" />
      </Field>

      <footer className="mt-auto flex h-[66px] shrink-0 items-start justify-between border-t-2 border-[#dcdcdc] pt-[7px] pr-[19px] pl-[19px]">
        <button className="flex h-[46px] w-12 items-center justify-center rounded-[9px] border border-[#c8c8c8] bg-white pt-[2px] shadow-sm">
          <svg width="26" height="26" viewBox="0 0 26 26" stroke="#333" strokeWidth="2">
            <path d="M0 13 H26 M13 0 V26" />
          </svg>
        </button>
        <button className="h-[46px] w-[118px] rounded-[9px] border border-[#c8c8c8] bg-white pt-[3px] text-[26.200px] leading-[44px] text-[#555] shadow-sm">
          编辑
        </button>
      </footer>
    </main>
  );
}

/* Smudges left along the divider between the sidebar and the list. */
function DividerMarks() {
  return (
    <svg width="36" height="680" viewBox="0 0 36 680" className="pointer-events-none absolute top-[230px] left-[496px]">
      <path d="M34 2 Q28 8 28 18 Q28 30 34 37 Z" fill="#d4d4d4" />
      <path d="M34 58 Q28 60 26 74 L24 95 V211 H30 L34 209 Z" fill="#d6d6d6" />
      <path d="M25 74 V211 H29 V60 Z" fill="#c6c6c6" />
      <path d="M24 60 H29 L24 74 Z" fill="#f8f8f8" />
      <path d="M0 120 H10 V211 L0 216 Z" fill="#f7f7f7" />
      <path d="M34 514 Q28 518 28 530 Q28 544 34 549 Z" fill="#d4d4d4" />
      <path d="M34 638 Q30 646 30 656 V668 L34 666 Z" fill="#dedede" />
    </svg>
  );
}

export default function App() {
  return (
    <div
      className="relative flex h-[1040px] w-[1800px] overflow-hidden bg-white font-['Inter','Noto_Sans_CJK_SC',sans-serif]"
      lang="zh-CN"
    >
      <Sidebar />
      <ItemList />
      <Detail />
      <DividerMarks />
    </div>
  );
}
